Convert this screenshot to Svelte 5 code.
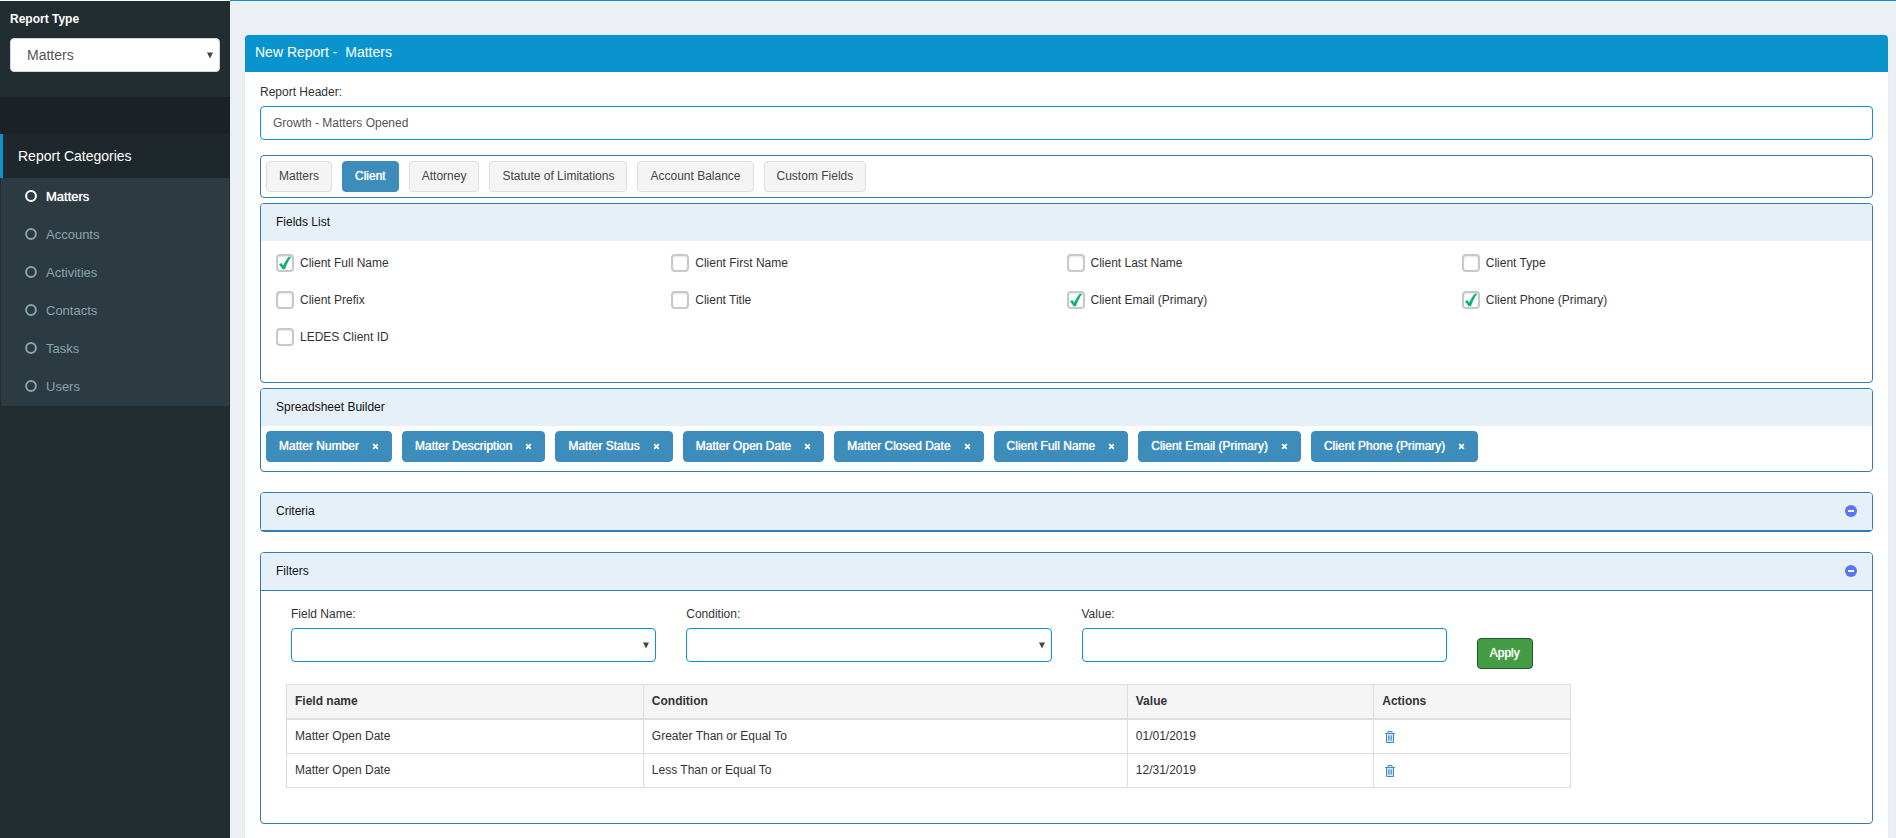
<script>
  const categories = ['Matters', 'Accounts', 'Activities', 'Contacts', 'Tasks', 'Users'];
  const tabs = ['Matters', 'Client', 'Attorney', 'Statute of Limitations', 'Account Balance', 'Custom Fields'];

  let reportType = $state('Matters');
  let reportHeader = $state('Growth - Matters Opened');
  let category = $state('Matters');
  let activeTab = $state('Client');
  let fieldName = $state('');
  let condition = $state('');
  let value = $state('');

  let fields = $state([
    { name: 'Client Full Name', checked: true },
    { name: 'Client First Name', checked: false },
    { name: 'Client Last Name', checked: false },
    { name: 'Client Type', checked: false },
    { name: 'Client Prefix', checked: false },
    { name: 'Client Title', checked: false },
    { name: 'Client Email (Primary)', checked: true },
    { name: 'Client Phone (Primary)', checked: true },
    { name: 'LEDES Client ID', checked: false }
  ]);

  let columns = $state([
    'Matter Number',
    'Matter Description',
    'Matter Status',
    'Matter Open Date',
    'Matter Closed Date',
    'Client Full Name',
    'Client Email (Primary)',
    'Client Phone (Primary)'
  ]);

  let filters = $state([
    { field: 'Matter Open Date', condition: 'Greater Than or Equal To', value: '01/01/2019' },
    { field: 'Matter Open Date', condition: 'Less Than or Equal To', value: '12/31/2019' }
  ]);

  let filtersOpen = $state(true);

  function removeColumn(name) {
    columns = columns.filter((c) => c !== name);
    const field = fields.find((f) => f.name === name);
    if (field) field.checked = false;
  }

  function toggleField(field) {
    if (field.checked) columns.push(field.name);
    else columns = columns.filter((c) => c !== field.name);
  }

  function applyFilter() {
    if (!fieldName || !condition) return;
    filters.push({ field: fieldName, condition, value });
  }
</script>

{#snippet arrow()}
  <svg class="arrow" viewBox="0 0 7 7" aria-hidden="true"><path d="M0 0h7L3.5 7z" fill="currentColor" /></svg>
{/snippet}

{#snippet minus()}
  <svg class="minus" viewBox="0 0 12 12" aria-hidden="true">
    <circle cx="6" cy="6" r="6" fill="#5c74f7" />
    <path d="M3 5h6v2H3z" fill="#fff" />
  </svg>
{/snippet}

<div class="layout">
  <aside class="sidebar">
    <div class="type">
      <label for="report-type">Report Type</label>
      <div class="select">
        <select id="report-type" class="control plain" bind:value={reportType}>
          <option>Matters</option>
          <option>Accounts</option>
          <option>Contacts</option>
        </select>
        {@render arrow()}
      </div>
    </div>
    <h2>Report Categories</h2>
    <nav>
      {#each categories as item}
        <a href="#{item.toLowerCase()}" class:active={item === category} onclick={() => (category = item)}>
          <svg viewBox="0 0 12 12" aria-hidden="true">
            <circle cx="6" cy="6" r="4.9" fill="none" stroke="currentColor" stroke-width="2" />
          </svg>
          {item}
        </a>
      {/each}
    </nav>
  </aside>

  <main>
    <section class="panel">
      <h1>New Report - &nbsp;{reportType}</h1>
      <div class="panel-body">
        <label for="report-header">Report Header:</label>
        <input id="report-header" class="control" type="text" bind:value={reportHeader} />

        <div class="box tabs">
          {#each tabs as tab}
            <button type="button" class="btn" class:selected={tab === activeTab} onclick={() => (activeTab = tab)}>{tab}</button>
          {/each}
        </div>

        <div class="box">
          <h3>Fields List</h3>
          <div class="fields">
            {#each fields as field}
              <label class="field">
                <span class="tick">
                  <input type="checkbox" bind:checked={field.checked} onchange={() => toggleField(field)} />
                  {#if field.checked}
                    <svg viewBox="0 0 18 18" aria-hidden="true">
                      <path d="M3 10.4l2.2-1.4 2 2.6C8.7 8 10.8 5 12.8 2.8h2.4C12.7 6.4 10.4 10.8 9 15.2H6.5C5.5 13.3 4.400 11.8 3 10.4z" fill="#10b07c" />
                    </svg>
                  {/if}
                </span>
                <span>{field.name}</span>
              </label>
            {/each}
          </div>
        </div>

        <div class="box">
          <h3>Spreadsheet Builder</h3>
          <div class="chips">
            {#each columns as column}
              <button type="button" class="btn selected chip" aria-label="Remove {column}" onclick={() => removeColumn(column)}>
                {column}
                <svg viewBox="0 0 7 7" aria-hidden="true">
                  <path d="M1.2 1.2l4.6 4.6M5.8 1.2L1.2 5.8" stroke="currentColor" stroke-width="1.8" />
                </svg>
              </button>
            {/each}
          </div>
        </div>

        <div class="box spaced">
          <h3 class="ruled">
            Criteria
            <button type="button" class="icon" aria-label="Collapse criteria">{@render minus()}</button>
          </h3>
        </div>

        <div class="box spaced">
          <h3 class="ruled">
            Filters
            <button type="button" class="icon" aria-label="Toggle filters" onclick={() => (filtersOpen = !filtersOpen)}>
              {@render minus()}
            </button>
          </h3>
          {#if filtersOpen}
            <div class="filter-form">
              <div>
                <label for="field-name">Field Name:</label>
                <div class="select">
                  <select id="field-name" class="control" bind:value={fieldName}>
                    <option value=""></option>
                    <option>Matter Open Date</option>
                    <option>Matter Closed Date</option>
                  </select>
                  {@render arrow()}
                </div>
              </div>
              <div>
                <label for="condition">Condition:</label>
                <div class="select">
                  <select id="condition" class="control" bind:value={condition}>
                    <option value=""></option>
                    <option>Greater Than or Equal To</option>
                    <option>Less Than or Equal To</option>
                  </select>
                  {@render arrow()}
                </div>
              </div>
              <div>
                <label for="filter-value">Value:</label>
                <input id="filter-value" class="control" type="text" bind:value />
              </div>
              <div class="apply">
                <button type="button" class="btn success" onclick={applyFilter}>Apply</button>
              </div>
            </div>

            <div class="table-wrap">
              <table>
                <colgroup>
                  <col class="col-field" />
                  <col class="col-condition" />
                  <col class="col-value" />
                  <col />
                </colgroup>
                <thead>
                  <tr>
                    <th>Field name</th>
                    <th>Condition</th>
                    <th>Value</th>
                    <th>Actions</th>
                  </tr>
                </thead>
                <tbody>
                  {#each filters as filter, i}
                    <tr>
                      <td>{filter.field}</td>
                      <td>{filter.condition}</td>
                      <td>{filter.value}</td>
                      <td>
                        <button type="button" class="icon trash" aria-label="Delete filter" onclick={() => filters.splice(i, 1)}>
                          <svg viewBox="0 0 12 12" fill="none" stroke="#428bca" aria-hidden="true">
                            <path d="M1 2.5h10M4 2V.5h4V2" />
                            <path d="M2.5 3v8.500h7V3" fill="#d3e5f4" />
                            <path d="M4.5 4.500v5M6 4.500v5M7.500 4.500v5" stroke-width=".8" />
                          </svg>
                        </button>
                      </td>
                    </tr>
                  {/each}
                </tbody>
              </table>
            </div>
          {/if}
        </div>
      </div>
    </section>
  </main>
</div>

<style>
  :global(body) {
    background: #fff;
  }

  .layout {
    display: flex;
    min-height: 100vh;
    font-family: "Liberation Sans", Arial, sans-serif;
    font-size: 12px;
    line-height: 17px;
    color: #333;
  }

  .layout,
  .layout :global(*) {
    box-sizing: border-box;
  }

  h1,
  h2,
  h3 {
    margin: 0;
    font-weight: 400;
  }

  button,
  input,
  select {
    font: inherit;
    margin: 0;
  }

  svg {
    display: block;
  }

  /* Sidebar */
  .sidebar {
    flex: none;
    width: 230px;
    margin-top: 1px;
    background: #222d32;
    color: #fff;
  }

  .type {
    padding: 10px 10px 25px;
  }

  .type label {
    display: block;
    margin-bottom: 10px;
    font-weight: 700;
  }

  .sidebar h2 {
    padding: 13px 18px;
    border-top: 37px solid #1a2226;
    background: linear-gradient(90deg, #0994ce 3px, #1e282c 3px);
    font-size: 14px;
    line-height: 18px;
  }

  nav {
    margin: 0 1px;
    background: #2c3b41;
  }

  nav a {
    display: flex;
    align-items: center;
    gap: 9px;
    height: 38px;
    padding: 0 0 2px 24px;
    font-size: 13px;
    color: #8aa4af;
    text-decoration: none;
  }

  nav a svg {
    width: 12px;
    height: 12px;
  }

  nav a.active {
    color: #fff;
    text-shadow: 0 0 1px #fff;
  }

  /* Form controls */
  .control {
    display: block;
    width: 100%;
    height: 34px;
    padding: 6px 12px;
    border: 1px solid #0994ce;
    border-radius: 4px;
    background: #fff;
    color: #555;
    outline: none;
    appearance: none;
  }

  .control.plain {
    padding-left: 16px;
    border-color: #d2d6de;
    font-size: 14px;
  }

  .select {
    position: relative;
    color: #444;
  }

  .arrow {
    position: absolute;
    top: 14px;
    right: 7px;
    width: 6px;
    height: 7px;
    pointer-events: none;
  }

  .btn {
    height: 31px;
    padding: 0 12px 1px;
    border: 1px solid #ddd;
    border-radius: 4px;
    background: #f4f4f4;
    color: #444;
    white-space: nowrap;
    cursor: pointer;
  }

  .btn.selected {
    border-color: #3c8dbc;
    background: #3c8dbc;
    color: #fff;
    text-shadow: 0 0 1px #fff;
  }

  .btn.success {
    border-color: #255625;
    background: #449d44;
    color: #fff;
    text-shadow: 0 0 1px #fff;
  }

  .icon {
    padding: 0;
    border: 0;
    background: none;
    cursor: pointer;
  }

  .minus {
    width: 12px;
    height: 12px;
  }

  /* Main panel */
  main {
    display: flex;
    flex: 1;
    min-width: 0;
    padding: 34px 8px 0 15px;
    border-top: 1px solid #0994ce;
    background: #ecf0f5;
  }

  .panel {
    flex: 1;
    min-width: 0;
    border-radius: 4px 4px 0 0;
    background: #fff;
    box-shadow: 0 0 1px rgba(0, 0, 0, 0.2);
  }

  h1 {
    padding: 8px 10px 11px;
    border-radius: 4px 4px 0 0;
    background: #0994ce;
    color: #fff;
    font-size: 14px;
    line-height: 18px;
  }

  .panel-body {
    padding: 12px 15px 0;
  }

  .panel-body > label,
  .filter-form label {
    display: block;
    margin-bottom: 5px;
  }

  .box {
    margin-top: 5px;
    border: 1px solid #337ab7;
    border-radius: 4px;
  }

  .box.tabs {
    display: flex;
    flex-wrap: wrap;
    gap: 10px;
    margin-top: 15px;
    padding: 5px;
  }

  .box.spaced {
    margin-top: 20px;
  }

  h3 {
    display: flex;
    align-items: center;
    justify-content: space-between;
    padding: 10px 15px;
    border-radius: 3px 3px 0 0;
    background: #e6f0f9;
    color: #111;
    font-size: 12px;
    line-height: 17px;
  }

  h3.ruled {
    border-bottom: 1px solid #337ab7;
  }

  h3 .icon {
    padding-bottom: 2px;
  }

  .fields {
    display: grid;
    grid-template-columns: repeat(4, 1fr);
    row-gap: 19px;
    padding: 13px 15px 36px;
  }

  .field {
    display: flex;
    align-items: flex-end;
    gap: 6px;
    height: 18px;
  }

  .tick {
    display: grid;
  }

  .tick > * {
    grid-area: 1 / 1;
    width: 18px;
    height: 18px;
  }

  .tick input {
    appearance: none;
    border: 2px solid #c8c8c8;
    border-radius: 4px;
    background: #fff;
    box-shadow: inset 0 1px 2px rgba(0, 0, 0, 0.1);
  }

  .tick svg {
    pointer-events: none;
  }

  .chips {
    display: flex;
    flex-wrap: wrap;
    gap: 10px;
    padding: 5px 5px 9px;
  }

  .chip {
    display: flex;
    align-items: center;
    gap: 13px;
  }

  .chip svg {
    width: 7px;
    height: 7px;
  }

  /* Filters */
  .filter-form {
    display: grid;
    grid-template-columns: repeat(4, 1fr);
    gap: 30px;
    padding: 15px 30px;
  }

  .apply {
    padding-top: 32px;
  }

  .table-wrap {
    padding: 0 0 35px 25px;
  }

  table {
    width: 81%;
    border-collapse: collapse;
    table-layout: fixed;
  }

  .col-field {
    width: 27.8%;
  }

  .col-condition {
    width: 37.7%;
  }

  .col-value {
    width: 19.2%;
  }

  th,
  td {
    padding: 8px;
    border: 1px solid #ddd;
    text-align: left;
  }

  th {
    border-bottom-width: 2px;
    background: #f5f5f5;
    font-weight: 700;
  }

  .trash {
    display: block;
    padding: 0 2px;
  }

  .trash svg {
    width: 12px;
    height: 12px;
  }
</style>
